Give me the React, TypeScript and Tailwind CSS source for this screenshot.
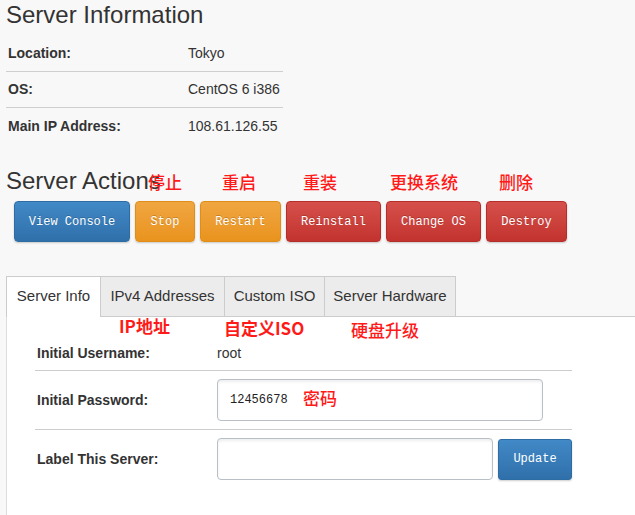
import React from 'react';

const SANS = "font-['Liberation_Sans',Arial,sans-serif]";
const MONO = "font-['Liberation_Mono','Courier_New',monospace]";
const CJK = "font-['Noto_Sans_CJK_SC',sans-serif]";

const ACTIONS = [
  { label: 'View Console', w: 'w-[116px]', tone: 'blue' },
  { label: 'Stop', w: 'w-[60px]', tone: 'orange' },
  { label: 'Restart', w: 'w-[81px]', tone: 'orange' },
  { label: 'Reinstall', w: 'w-[95px]', tone: 'red' },
  { label: 'Change OS', w: 'w-[95px]', tone: 'red' },
  { label: 'Destroy', w: 'w-[81px]', tone: 'red' },
];

const TONES: Record<string, string> = {
  blue: 'bg-gradient-to-b from-[#4189c7] to-[#3070aa] border-[#2e6da4]',
  orange: 'bg-gradient-to-b from-[#f0a640] to-[#e9931c] border-[#e08e1a]',
  red: 'bg-gradient-to-b from-[#d6504b] to-[#c2322e] border-[#b72d29]',
};

const INFO = [
  { k: 'Location:', v: 'Tokyo' },
  { k: 'OS:', v: 'CentOS 6 i386' },
  { k: 'Main IP Address:', v: '108.61.126.55' },
];

const TABS = [
  { label: 'Server Info', w: 'w-[95px]', active: true },
  { label: 'IPv4 Addresses', w: 'w-[124px]' },
  { label: 'Custom ISO', w: 'w-[100px]' },
  { label: 'Server Hardware', w: 'w-[131px]' },
];

// red hand-written notes laid over the screenshot
const NOTES = [
  { t: '停止', c: 'left-[148px] top-[171px]' },
  { t: '重启', c: 'left-[222px] top-[171px]' },
  { t: '重装', c: 'left-[303px] top-[171px]' },
  { t: '更换系统', c: 'left-[390px] top-[171px]' },
  { t: '删除', c: 'left-[499px] top-[171px]' },
  { t: 'IP地址', c: 'left-[119px] top-[315px] font-bold' },
  { t: '自定义ISO', c: 'left-[224px] top-[317px] font-bold' },
  { t: '硬盘升级', c: 'left-[351px] top-[319px]' },
  { t: '密码', c: 'left-[303px] top-[387px]' },
];

const ActionButton = ({ label, w, tone }: { label: string; w: string; tone: string }) => (
  <button
    className={`${w} h-[41px] rounded-[4px] border ${TONES[tone]} text-white text-[12px] ${MONO} shadow-[0_1px_2px_rgba(0,0,0,0.2)] [text-shadow:0_-1px_0_rgba(0,0,0,0.2)]`}
  >
    {label}
  </button>
);

export default function App() {
  return (
    <div className={`relative w-[635px] h-[515px] overflow-hidden bg-[#f8f8f8] text-[#333] ${SANS}`}>
      <h1 className="pl-[6px] text-[24px] leading-[30px] font-normal">Server Information</h1>

      <div className="ml-[6px] w-[277px] mt-[6px]">
        {INFO.map((r, i) => (
          <div
            key={r.k}
            className={`flex items-center h-[36px] text-[14px] ${i < INFO.length - 1 ? 'border-b border-[#cfcfcf]' : ''}`}
          >
            <span className="w-[182px] pl-[2px] font-bold">{r.k}</span>
            <span>{r.v}</span>
          </div>
        ))}
      </div>

      <h2 className="pl-[6px] mt-[23px] text-[24px] leading-[28px] font-normal">Server Actions</h2>

      <div className="flex gap-[5px] pl-[14px] mt-[6px]">
        {ACTIONS.map(a => (
          <ActionButton key={a.label} {...a} />
        ))}
      </div>

      <div className="ml-[6px] mt-[34px] flex border-b border-[#ccc]">
        {TABS.map(t => (
          <div
            key={t.label}
            className={`${t.w} h-[40px] flex items-center justify-center text-[15px] border-t border-r border-[#ccc] first:border-l ${
              t.active ? 'bg-white -mb-px h-[41px] pb-px' : 'bg-[#ececec]'
            }`}
          >
            {t.label}
          </div>
        ))}
      </div>

      <div className="ml-[6px] h-[200px] bg-white border-l border-[#ddd] pt-[19px]">
        <div className="ml-[28px] w-[537px] text-[14px]">
          <div className="flex items-center h-[35px] border-b border-[#ccc]">
            <span className="w-[182px] pl-[2px] font-bold">Initial Username:</span>
            <span>root</span>
          </div>
          <div className="flex items-center h-[59px] border-b border-[#ccc]">
            <span className="w-[182px] pl-[2px] font-bold">Initial Password:</span>
            <input
              readOnly
              value="12456678"
              className={`w-[326px] h-[42px] rounded-[4px] border border-[#b9bfc6] bg-white px-[12px] text-[12px] text-[#222] ${MONO} shadow-[inset_0_2px_3px_rgba(0,0,0,0.07)] outline-none`}
            />
          </div>
          <div className="flex items-center pt-[8px] gap-[5px]">
            <span className="w-[177px] pl-[2px] font-bold">Label This Server:</span>
            <input
              className="w-[276px] h-[42px] rounded-[4px] border border-[#b9bfc6] bg-white px-[12px] shadow-[inset_0_2px_3px_rgba(0,0,0,0.07)] outline-none"
            />
            <button
              className={`w-[74px] h-[41px] rounded-[3px] border ${TONES.blue} text-white text-[12px] ${MONO} shadow-[0_1px_2px_rgba(0,0,0,0.2)]`}
            >
              Update
            </button>
          </div>
        </div>
      </div>

      {NOTES.map(n => (
        <span key={n.t} className={`absolute ${n.c} text-[17px] leading-[22px] text-[#ff1a1a] ${CJK} ${n.c.includes('font-bold') ? '' : 'font-medium'}`}>
          {n.t}
        </span>
      ))}
    </div>
  );
}
